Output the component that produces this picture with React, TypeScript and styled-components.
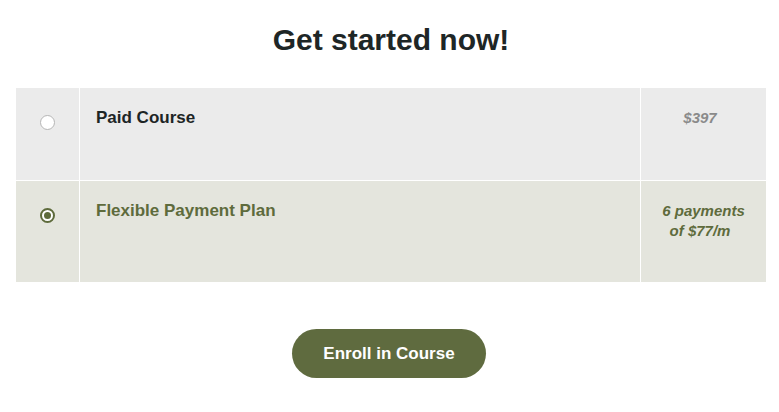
import { FC, useState } from "react";
import styled, { createGlobalStyle } from "styled-components";

const GlobalStyle = createGlobalStyle`
  body {
    margin: 0;
    background: #ffffff;
    font-family: "Liberation Sans", Arial, sans-serif;
  }
`;

const Page = styled.div`
  display: flex;
  flex-direction: column;
  align-items: center;
  padding: 22px 13px 0 16px;
`;

const Title = styled.h1`
  margin: 0 0 30px;
  font-size: 30px;
  line-height: 36px;
  font-weight: 700;
  color: #1e2626;
`;

const PlanTable = styled.div`
  display: grid;
  grid-template-columns: 63px 1fr 125px;
  gap: 1px;
  width: 750px;
  background: #ffffff;
`;

const Cell = styled.div<{ $selected: boolean }>`
  background: ${({ $selected }) => ($selected ? "#e4e5dd" : "#ebebeb")};
  min-height: 92px;
  box-sizing: border-box;
  cursor: pointer;
`;

const RadioCell = styled(Cell)`
  display: flex;
  justify-content: center;
  padding-top: 27px;
`;

const NameCell = styled(Cell)`
  padding: 18px 16px 0;
  font-size: 17px;
  line-height: 24px;
  font-weight: 700;
  color: ${({ $selected }) => ($selected ? "#5e6b3c" : "#1d2525")};
`;

const PriceCell = styled(Cell)`
  padding: 20px 12px 41px;
  font-size: 15px;
  line-height: 20px;
  font-weight: 700;
  font-style: italic;
  text-align: center;
  color: ${({ $selected }) => ($selected ? "#5e6b3c" : "#8a8a8a")};
`;

const PriceLine = styled.div<{ $shift: boolean }>`
  padding-right: ${({ $shift }) => ($shift ? "7px" : "0")};
`;

const Radio = styled.span<{ $checked: boolean }>`
  display: flex;
  align-items: center;
  justify-content: center;
  width: 15px;
  height: 15px;
  box-sizing: border-box;
  border-radius: 50%;
  background: #ffffff;
  border: ${({ $checked }) =>
    $checked ? "2px solid #5e6b3c" : "1px solid #b5b5b5"};

  &::after {
    content: "";
    display: ${({ $checked }) => ($checked ? "block" : "none")};
    width: 7px;
    height: 7px;
    border-radius: 50%;
    background: #5e6b3c;
  }
`;

const EnrollButton = styled.button`
  margin: 47px 4px 0 0;
  height: 49px;
  padding: 0 31px;
  border: none;
  border-radius: 25px;
  background: #5f6b3f;
  color: #ffffff;
  font-family: "Liberation Sans", Arial, sans-serif;
  font-size: 17px;
  font-weight: 700;
  cursor: pointer;
`;

interface Plan {
  id: string;
  name: string;
  price: string[];
}

const plans: Plan[] = [
  { id: "paid", name: "Paid Course", price: ["$397"] },
  { id: "flex", name: "Flexible Payment Plan", price: ["6 payments", "of $77/m"] },
];

const App: FC = () => {
  const [selected, setSelected] = useState<string>("flex");

  return (
    <>
      <GlobalStyle />
      <Page>
        <Title>Get started now!</Title>
        <PlanTable>
          {plans.map((plan) => {
            const isSelected = plan.id === selected;
            const pick = () => setSelected(plan.id);
            return [
              <RadioCell key={`${plan.id}-r`} $selected={isSelected} onClick={pick}>
                <Radio $checked={isSelected} />
              </RadioCell>,
              <NameCell key={`${plan.id}-n`} $selected={isSelected} onClick={pick}>
                {plan.name}
              </NameCell>,
              <PriceCell key={`${plan.id}-p`} $selected={isSelected} onClick={pick}>
                {plan.price.map((line, i) => (
                  <PriceLine key={line} $shift={plan.price.length === 1 || i > 0}>
                    {line}
                  </PriceLine>
                ))}
              </PriceCell>,
            ];
          })}
        </PlanTable>
        <EnrollButton>Enroll in Course</EnrollButton>
      </Page>
    </>
  );
};

export default App;
